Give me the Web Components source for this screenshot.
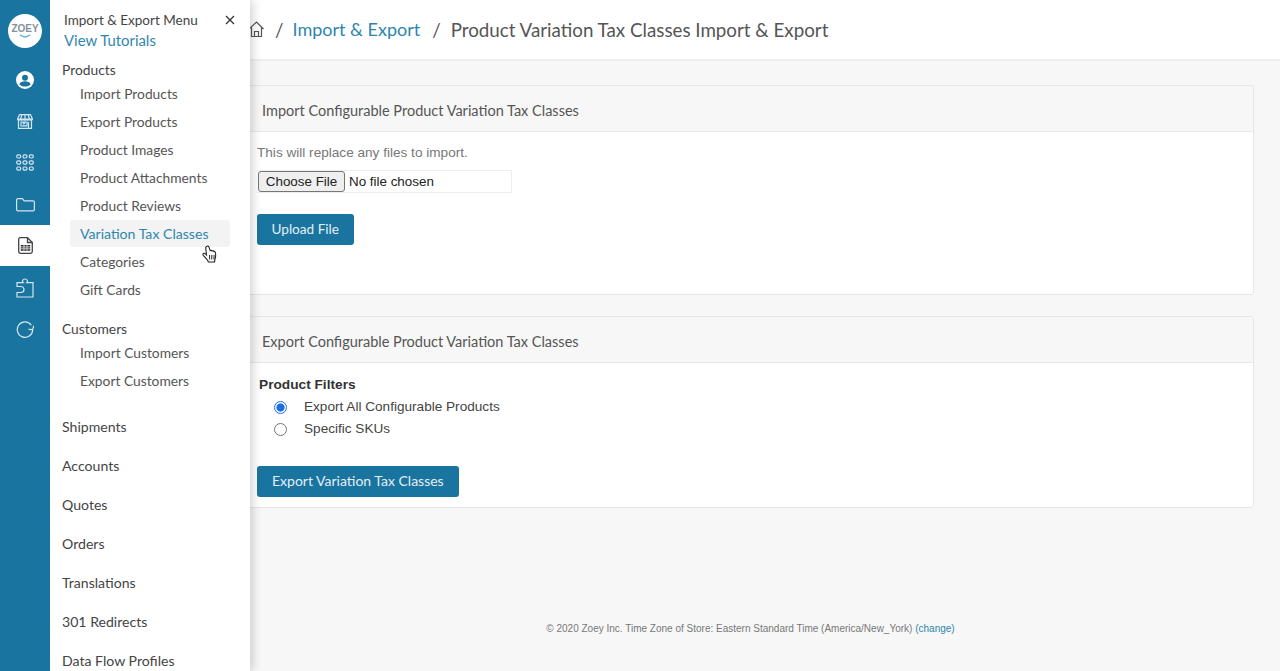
<!DOCTYPE html>
<html lang="en">
<head>
<meta charset="utf-8">
<title>Product Variation Tax Classes Import & Export</title>
<style>
  html, body { margin: 0; height: 671px; overflow: hidden; }
  body { font-family: Lato, "Open Sans", sans-serif; color: #555; background: #f7f7f7; }
</style>
</head>
<body>
<zoey-app>
  <zoey-rail slot="rail"></zoey-rail>
  <zoey-menu slot="menu" title-text="Import &amp; Export Menu">
    <menu-group label="Products" style="margin-bottom: 15px">
      <menu-link>Import Products</menu-link>
      <menu-link>Export Products</menu-link>
      <menu-link>Product Images</menu-link>
      <menu-link>Product Attachments</menu-link>
      <menu-link>Product Reviews</menu-link>
      <menu-link active>Variation Tax Classes</menu-link>
      <menu-link>Categories</menu-link>
      <menu-link>Gift Cards</menu-link>
    </menu-group>
    <menu-group label="Customers" style="margin-bottom: 12px">
      <menu-link>Import Customers</menu-link>
      <menu-link>Export Customers</menu-link>
    </menu-group>
    <menu-section>Shipments</menu-section>
    <menu-section>Accounts</menu-section>
    <menu-section>Quotes</menu-section>
    <menu-section>Orders</menu-section>
    <menu-section>Translations</menu-section>
    <menu-section>301 Redirects</menu-section>
    <menu-section>Data Flow Profiles</menu-section>
  </zoey-menu>
  <bread-crumbs slot="top" parent="Import &amp; Export" current="Product Variation Tax Classes Import &amp; Export"></bread-crumbs>
  <zoey-card heading="Import Configurable Product Variation Tax Classes" style="--card-height: 210px">
    <import-form></import-form>
  </zoey-card>
  <zoey-card heading="Export Configurable Product Variation Tax Classes" style="--card-height: 192px">
    <export-form></export-form>
  </zoey-card>
  <page-footer slot="bottom"></page-footer>
</zoey-app>

<script>
const BLUE = "#1a74a0";
const LINK = "#2f86ad";

class ZoeyApp extends HTMLElement {
  constructor() {
    super();
    this.attachShadow({ mode: "open" });
    this.shadowRoot.innerHTML = /* html */`
    <style>
      :host { display: flex; width: 1280px; height: 671px; overflow: hidden; position: relative; }
      .side { flex: none; display: flex; position: relative; z-index: 2; box-shadow: 2px 0 10px #0003; }
      main { flex: 1; min-width: 0; display: flex; flex-direction: column; }
      .cards { display: flex; flex-direction: column; gap: 21px; padding: 24px 26px 0 0; margin-left: -8px; }
      .hand { position: absolute; left: 202px; top: 245px; z-index: 3; }
    </style>
    <div class="side"><slot name="rail"></slot><slot name="menu"></slot></div>
    <main>
      <slot name="top"></slot>
      <div class="cards"><slot></slot></div>
      <slot name="bottom"></slot>
    </main>
    <svg class="hand" width="16" height="19" viewBox="0 0 16 19">
      <path d="M5 1.2c1-.5 1.7.1 2 1l1.2 3.4c.6-.5 1.500-.3 1.800.4.600-.4 1.400-.2 1.700.5.700-.3 1.400 0 1.600.8.500 2 .5 4-.1 6-.3 1.200-.6 2.200-.6 3.700H6.400c-.4-1.500-1.400-2.500-2.600-3.800L1.300 10.300c-.8-1-.2-2 .8-2 .8 0 1.500.6 2.400 1.600L3.700 3c-.1-.8.500-1.500 1.300-1.800z" fill="#fff" stroke="#222" stroke-width="1.100"/>
      <path d="M7.600 10v4.500M9.800 10v4.500M12 10v4.500" stroke="#222" stroke-width="1" fill="none"/>
    </svg>`;
  }
}

class ZoeyRail extends HTMLElement {
  constructor() {
    super();
    this.attachShadow({ mode: "open" });
    const stroke = 'fill="none" stroke="#d3e5ef" stroke-width="1.200"';
    this.shadowRoot.innerHTML = /* html */`
    <style>
      :host { display: flex; flex-direction: column; align-items: center; width: 50px; height: 671px; background: ${BLUE}; }
      .logo { width: 34px; height: 34px; margin: 14px 0 15px; border-radius: 50%; background: #fff; display: flex; flex-direction: column; align-items: center; justify-content: center; color: #85929a; font: 700 10px/10px "Liberation Sans", sans-serif; }
      .logo svg { display: block; margin-top: 0; }
      .slot { width: 50px; display: flex; align-items: center; justify-content: center; }
      .on { background: #fff; }
      svg { display: block; }
    </style>
    <div class="logo">ZOEY<svg width="14" height="4" viewBox="0 0 14 4"><path d="M2 .8c3 2.600 7 2.600 10 0" fill="none" stroke="#5db4e0" stroke-width="1.500"/></svg></div>
    <div class="slot" style="height:34px">
      <svg width="18" height="18" viewBox="0 0 18 18"><circle cx="9" cy="9" r="9" fill="#fff"/><circle cx="9" cy="6.700" r="3" fill="${BLUE}"/><path d="M3.300 13.200c1-2 3.200-2.900 5.700-2.900s4.700.9 5.700 2.900c-1.300 1.500-3.400 2.300-5.700 2.300s-4.400-.8-5.700-2.300z" fill="${BLUE}"/></svg>
    </div>
    <div class="slot" style="height:42px;margin-top:3px">
      <svg width="16" height="15" viewBox="0 0 16 15" ${stroke}><path d="M2.500 .7h11l2 4.300H.5zM1.500 6v8.300h13V6M.5 5c0 1.600 3 1.600 3 0 0 1.600 3 1.600 3 0 0 1.600 3 1.600 3 0 0 1.600 3 1.600 3 0 0 1.600 3 1.600 3 0M5 .7L3.500 5M8 .7V5M11 .7L12.500 5M4 8h6v4H4zM5.500 8l3 4M8.500 8l-3 4M11.500 8v6.300"/></svg>
    </div>
    <div class="slot" style="height:41px">
      <svg width="18" height="17" viewBox="0 0 18 17" ${stroke}><rect x=".7" y=".8" width="4" height="3.200" rx="1.400"/><rect x="7" y=".8" width="4" height="3.200" rx="1.400"/><rect x="13.300" y=".8" width="4" height="3.200" rx="1.400"/><rect x=".7" y="6.900" width="4" height="3.200" rx="1.400"/><rect x="7" y="6.900" width="4" height="3.200" rx="1.400"/><rect x="13.300" y="6.900" width="4" height="3.200" rx="1.400"/><rect x=".7" y="13" width="4" height="3.200" rx="1.400"/><rect x="7" y="13" width="4" height="3.200" rx="1.400"/><rect x="13.300" y="13" width="4" height="3.200" rx="1.400"/></svg>
    </div>
    <div class="slot" style="height:40px;padding-top:2px">
      <svg width="19" height="14" viewBox="0 0 19 14" ${stroke}><path d="M.6 11.500V2C.6 1.200 1.200.6 2 .6h4.400l1.800 2.200H17c.8 0 1.400.6 1.400 1.400v7.300c0 .8-.6 1.400-1.400 1.400H2c-.8 0-1.400-.6-1.400-1.400z"/></svg>
    </div>
    <div class="slot on" style="height:41px">
      <svg width="15" height="17" viewBox="0 0 15 17"><path d="M2 .7h7.500l4.800 4.800V14.500c0 1-.8 1.800-1.800 1.800H2.500c-1 0-1.800-.8-1.800-1.800V2C.7 1.300 1.300.7 2 .7z" fill="#fff" stroke="#444" stroke-width="1.300"/><path d="M9.500 .7v4.800h4.800" fill="none" stroke="#444" stroke-width="1.300"/><path d="M2.800 8h9.400v5.800H2.800z" fill="#333"/><path d="M2.800 9.900h9.400M2.800 11.800h9.400M6 8v5.800M9 8v5.800" stroke="#fff" stroke-width=".7"/></svg>
    </div>
    <div class="slot" style="height:44px">
      <svg width="18" height="20" viewBox="0 0 18 20" ${stroke}><path d="M1 4.700h6.200C6.500 4 6.300 3.400 6.600 2.600 7 1.500 8 1 9 1s2 .5 2.400 1.600c.3.800.1 1.400-.6 2.100H17V19H1v-4.500h4c1.700 0 3-1.300 3-3s-1.300-3-3-3H1z"/></svg>
    </div>
    <div class="slot" style="height:38px">
      <svg width="18" height="18" viewBox="0 0 18 18" ${stroke}><path d="M15.300 5.200A7.700 7.700 0 1 0 16.700 10"/><path d="M12.500 9.400l4.200.2 1-3.900" fill="none"/></svg>
    </div>`;
  }
}

class ZoeyMenu extends HTMLElement {
  constructor() {
    super();
    this.attachShadow({ mode: "open" });
  }

  connectedCallback() {
    this.shadowRoot.innerHTML = /* html */`
    <style>
      :host { display: block; width: 200px; height: 671px; overflow: hidden; background: #fff; box-sizing: border-box; }
      .head { position: relative; padding: 10px 0 0 14px; }
      .title { font-size: 13.500px; line-height: 20px; color: #444; }
      .tut { font-size: 14.900px; line-height: 20px; color: ${LINK}; }
      .close { position: absolute; left: 175px; top: 15px; }
      .body { padding: 10px 0 0 12px; }
    </style>
    <div class="head">
      <div class="title">${this.getAttribute("title-text").replace("&", "&amp;")}</div>
      <div class="tut">View Tutorials</div>
      <svg class="close" width="10" height="10" viewBox="0 0 10 10"><path d="M1 1l8 8M9 1l-8 8" stroke="#333" stroke-width="1.300" fill="none"/></svg>
    </div>
    <div class="body"><slot></slot></div>`;
  }
}

class MenuGroup extends HTMLElement {
  constructor() {
    super();
    this.attachShadow({ mode: "open" });
  }

  connectedCallback() {
    this.shadowRoot.innerHTML = /* html */`
    <style>
      :host { display: block; }
      .label { font-size: 13.800px; line-height: 20px; color: #444; }
      .items { padding: 0 0 0 8px; display: flex; flex-direction: column; }
    </style>
    <div class="label">${this.getAttribute("label")}</div>
    <div class="items"><slot></slot></div>`;
  }
}

class MenuLink extends HTMLElement {
  constructor() {
    super();
    this.attachShadow({ mode: "open" });
    this.shadowRoot.innerHTML = /* html */`
    <style>
      :host { display: block; width: 160px; height: 28px; box-sizing: border-box; padding: 0 10px; font-size: 13.800px; line-height: 28px; color: #555; border-radius: 3px; }
      :host([active]) { background: #f3f3f3; color: ${LINK}; height: 27px; margin-bottom: 1px; line-height: 27px; font-size: 14.100px; }
    </style>
    <slot></slot>`;
  }
}

class MenuSection extends HTMLElement {
  constructor() {
    super();
    this.attachShadow({ mode: "open" });
    this.shadowRoot.innerHTML = /* html */`
    <style>
      :host { display: block; height: 39px; font-size: 14.100px; line-height: 39px; color: #444; }
    </style>
    <slot></slot>`;
  }
}

class BreadCrumbs extends HTMLElement {
  constructor() {
    super();
    this.attachShadow({ mode: "open" });
  }

  connectedCallback() {
    this.shadowRoot.innerHTML = /* html */`
    <style>
      :host { display: flex; align-items: center; box-sizing: border-box; height: 61px; padding-bottom: 1px; background: #fff; border-bottom: 2px solid #eee; font-size: 18.750px; color: #555; white-space: nowrap; }
      svg { margin: 0 11px 0 -1px; flex: none; }
      a { color: ${LINK}; text-decoration: none; font-size: 18px; margin-left: 9px; }
      .sep { margin: 0 10px 0 12px; }
    </style>
    <svg width="15" height="17" viewBox="0 0 15 17" fill="none" stroke="#555" stroke-width="1.200"><path d="M0 8l7.500-7L14.500 8M2.500 6.500V15.500h10V6.500M5.500 15.500v-5h4v5"/></svg>
    <span>/</span>
    <a>${this.getAttribute("parent").replace("&", "&amp;")}</a>
    <span class="sep">/</span>
    <span>${this.getAttribute("current").replace("&", "&amp;")}</span>`;
  }
}

class ZoeyCard extends HTMLElement {
  constructor() {
    super();
    this.attachShadow({ mode: "open" });
  }

  connectedCallback() {
    this.shadowRoot.innerHTML = /* html */`
    <style>
      :host { display: flex; flex-direction: column; box-sizing: border-box; height: var(--card-height); border: 1px solid #e6e6e6; border-radius: 3px; background: #fff; overflow: hidden; }
      header { flex: none; box-sizing: border-box; height: 46px; padding-left: 19px; background: #f7f7f7; border-bottom: 1px solid #e8e8e8; font-size: 14.500px; line-height: 49px; color: #555; }
      .body { padding-left: 14px; }
    </style>
    <header>${this.getAttribute("heading")}</header>
    <div class="body"><slot></slot></div>`;
  }
}

class ZoeyButton extends HTMLElement {
  constructor() {
    super();
    this.attachShadow({ mode: "open" });
    this.shadowRoot.innerHTML = /* html */`
    <style>
      :host { display: inline-block; box-sizing: border-box; height: 31px; padding: 0 15px; background: ${BLUE}; border-radius: 3px; color: #e4eff5; font-size: 14px; line-height: 30px; white-space: nowrap; }
    </style>
    <slot></slot>`;
  }
}

class FilePicker extends HTMLElement {
  constructor() {
    super();
    this.attachShadow({ mode: "open" });
    this.shadowRoot.innerHTML = /* html */`
    <style>
      :host { display: flex; align-items: center; gap: 4px; box-sizing: border-box; width: 255px; height: 23px; padding-left: 1px; border: 1px solid #eee; border-left: 0; background: #fff; font: 13.400px "Liberation Sans", sans-serif; color: #222; }
      .btn { box-sizing: border-box; width: 87px; height: 21px; border: 1px solid #767676; border-radius: 3px; background: #efefef; text-align: center; line-height: 19px; }
    </style>
    <span class="btn">Choose File</span><span>No file chosen</span>`;
  }
}

class RadioOption extends HTMLElement {
  constructor() {
    super();
    this.attachShadow({ mode: "open" });
    this.shadowRoot.innerHTML = /* html */`
    <style>
      :host { display: flex; align-items: center; height: 22px; padding-left: 17px; font: 13.600px "Liberation Sans", sans-serif; color: #444; }
      .dot { box-sizing: border-box; flex: none; width: 13px; height: 13px; margin-right: 17px; border-radius: 50%; border: 1px solid #767676; background: #fff; }
      :host([checked]) .dot { border: 1.500px solid #1a6ee8; background: radial-gradient(circle, #1a6ee8 0 3.800px, #fff 4.400px); }
      .txt { margin-top: -2px; }
    </style>
    <span class="dot"></span><span class="txt"><slot></slot></span>`;
  }
}

class ImportForm extends HTMLElement {
  constructor() {
    super();
    this.attachShadow({ mode: "open" });
    this.shadowRoot.innerHTML = /* html */`
    <style>
      :host { display: block; padding-top: 12px; }
      p { margin: 0 0 9px; font: 13.600px/17px "Liberation Sans", sans-serif; color: #777; }
      zoey-button { margin-top: 21px; font-size: 13.600px; }
    </style>
    <p>This will replace any files to import.</p>
    <file-picker></file-picker>
    <zoey-button style="font-size: 13.600px; padding: 0 14.500px">Upload File</zoey-button>`;
  }
}

class ExportForm extends HTMLElement {
  constructor() {
    super();
    this.attachShadow({ mode: "open" });
    this.shadowRoot.innerHTML = /* html */`
    <style>
      :host { display: block; padding-top: 13px; }
      h4 { margin: 0 0 3px 2px; font: 700 13.700px/17px "Liberation Sans", sans-serif; color: #333; }
      zoey-button { margin-top: 26px; }
    </style>
    <h4>Product Filters</h4>
    <radio-option checked>Export All Configurable Products</radio-option>
    <radio-option>Specific SKUs</radio-option>
    <zoey-button>Export Variation Tax Classes</zoey-button>`;
  }
}

class PageFooter extends HTMLElement {
  constructor() {
    super();
    this.attachShadow({ mode: "open" });
    this.shadowRoot.innerHTML = /* html */`
    <style>
      :host { display: block; margin-top: 114px; padding-right: 29px; text-align: center; font: 10px/14px "Liberation Sans", sans-serif; color: #777; }
      a { color: ${LINK}; }
    </style>
    © 2020 Zoey Inc. Time Zone of Store: Eastern Standard Time (America/New_York) <a>(change)</a>`;
  }
}

customElements.define("zoey-app", ZoeyApp);
customElements.define("zoey-rail", ZoeyRail);
customElements.define("zoey-menu", ZoeyMenu);
customElements.define("menu-group", MenuGroup);
customElements.define("menu-link", MenuLink);
customElements.define("menu-section", MenuSection);
customElements.define("bread-crumbs", BreadCrumbs);
customElements.define("zoey-card", ZoeyCard);
customElements.define("zoey-button", ZoeyButton);
customElements.define("file-picker", FilePicker);
customElements.define("radio-option", RadioOption);
customElements.define("import-form", ImportForm);
customElements.define("export-form", ExportForm);
customElements.define("page-footer", PageFooter);
</script>
</body>
</html>
